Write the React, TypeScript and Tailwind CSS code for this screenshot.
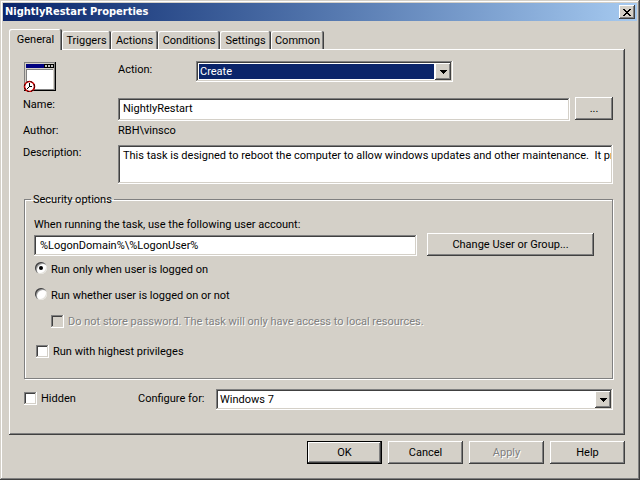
import { useState } from 'react';
import type { ReactNode } from 'react';

const raised =
  'bg-[#d4d0c8] shadow-[inset_-1px_-1px_#404040,inset_1px_1px_#fff,inset_-2px_-2px_#808080]';
const sunken =
  'shadow-[inset_-1px_-1px_#fff,inset_1px_1px_#808080,inset_-2px_-2px_#d4d0c8,inset_2px_2px_#404040]';
const disabledText = 'text-[#808080] [text-shadow:1px_1px_#fff]';

const tabs = [
  { name: 'General', width: 'w-[53px]' },
  { name: 'Triggers', width: 'w-[49px]' },
  { name: 'Actions', width: 'w-[47px]' },
  { name: 'Conditions', width: 'w-[62px]' },
  { name: 'Settings', width: 'w-[51px]' },
  { name: 'Common', width: 'w-[53px]' },
];

function TaskIcon() {
  return (
    <svg width="33" height="31" viewBox="0 0 33 31" shapeRendering="crispEdges" aria-hidden="true">
      <path d="M1 1h32v29H1z" fill="#000" />
      <path d="M1 1h31v28H1z" fill="#808080" />
      <path d="M2 2h29v26H2z" fill="#d4d0c8" />
      <path d="M3 3h28v4H3z" fill="#000080" />
      <path d="M21 3h10v4H21z" fill="#000" />
      <path d="M22 4h2v2h-2zM25 4h2v2h-2zM28 4h2v2h-2z" fill="#c0c0c0" />
      <path d="M3 8h27v20H3z" fill="#808080" />
      <path d="M4 9h26v19H4z" fill="#fff" />
      <g shapeRendering="auto">
        <circle cx="6.5" cy="25.5" r="5" fill="#fff" stroke="#e00000" strokeWidth="1.6" />
        <circle cx="6.5" cy="25.5" r="5" fill="none" stroke="#000" strokeWidth="1" strokeDasharray="2 2" />
      </g>
      <path d="M6 22h1v4H6zM5 26h1v1H5zM4 27h1v1H4zM7 25h2v1H7z" fill="#000" />
    </svg>
  );
}

function DropDown(props: { id: string; value: string; dark?: boolean; className: string }) {
  return (
    <div className={`relative h-[21px] p-[2px] ${sunken} ${props.className}`}>
      <select
        id={props.id}
        defaultValue={props.value}
        className={`block h-full w-full appearance-none border border-r-[17px] border-white pt-px pl-px outline-none ${
          props.dark ? 'bg-[#0a246a] text-white' : 'bg-white text-black'
        }`}
      >
        <option>{props.value}</option>
      </select>
      <span
        className={`pointer-events-none absolute top-[2px] right-[2px] bottom-[2px] flex w-4 items-center justify-center ${raised}`}
      >
        <svg width="7" height="4" viewBox="0 0 7 4" shapeRendering="crispEdges" aria-hidden="true">
          <path d="M0 0h7v1H0zM1 1h5v1H1zM2 2h3v1H2zM3 3h1v1H3z" fill="#000" />
        </svg>
      </span>
    </div>
  );
}

function Radio(props: { checked: boolean; onChange: () => void; children: ReactNode }) {
  return (
    <label className="flex h-[14px] items-center gap-1">
      <input
        type="radio"
        name="logon"
        checked={props.checked}
        onChange={props.onChange}
        className="grid size-3 shrink-0 appearance-none place-items-center rounded-full bg-white shadow-[inset_1px_1px_#404040,inset_-1px_-1px_#e4e2dc,inset_2px_2px_#a0a0a0] outline-none before:size-1 before:rounded-full checked:before:bg-black"
      />
      <span className="pt-[3px]">{props.children}</span>
    </label>
  );
}

function Check(props: { disabled?: boolean; children: ReactNode }) {
  return (
    <label className={`flex h-[14px] items-center gap-1 ${props.disabled ? disabledText : ''}`}>
      <input
        type="checkbox"
        disabled={props.disabled}
        className={`grid size-[13px] shrink-0 appearance-none place-items-center bg-white outline-none before:size-[5px] checked:before:bg-black disabled:bg-[#d4d0c8] ${sunken}`}
      />
      <span className="pt-[2px]">{props.children}</span>
    </label>
  );
}

function Button(props: { children: ReactNode; className?: string; disabled?: boolean; isDefault?: boolean }) {
  return (
    <button
      type="button"
      disabled={props.disabled}
      className={`h-[23px] ${raised} ${props.isDefault ? 'border border-black' : ''} ${
        props.disabled ? disabledText : ''
      } ${props.className ?? ''}`}
    >
      {props.children}
    </button>
  );
}

export default function App() {
  const [active, setActive] = useState('General');
  const [logon, setLogon] = useState('loggedOn');

  return (
    <main className="flex min-h-screen flex-col bg-[#d4d0c8] p-[3px] font-['Roboto',sans-serif] text-[11px] leading-[14px] text-black shadow-[inset_-1px_-1px_#404040,inset_1px_1px_#d4d0c8,inset_-2px_-2px_#808080,inset_2px_2px_#fff]">
      <header className="flex h-[18px] items-center justify-between bg-linear-to-r from-[#0a246a] to-[#a6caf0] pr-[2px] pl-[2px]">
        <h1 className="font-['DejaVu_Sans_Condensed','DejaVu_Sans',sans-serif] font-bold text-white">NightlyRestart Properties</h1>
        <button type="button" aria-label="Close" className={`flex h-[14px] w-4 items-center justify-center ${raised}`}>
          <svg width="8" height="7" viewBox="0 0 8 7" shapeRendering="crispEdges" aria-hidden="true">
            <path
              d="M0 0h2v1H0zM6 0h2v1H6zM1 1h2v1H1zM5 1h2v1H5zM2 2h4v1H2zM3 3h2v1H3zM2 4h4v1H2zM1 5h2v1H1zM5 5h2v1H5zM0 6h2v1H0zM6 6h2v1H6z"
              fill="#000"
            />
          </svg>
        </button>
      </header>

      <div className="flex flex-1 flex-col pt-2 pr-3 pl-[6px]">
        <div role="tablist" className="flex items-end">
          {tabs.map((tab) => (
            <button
              key={tab.name}
              type="button"
              role="tab"
              aria-selected={active === tab.name}
              onClick={() => setActive(tab.name)}
              className={`rounded-t-[2px] bg-[#d4d0c8] shadow-[inset_-1px_0_#404040,inset_1px_1px_#fff,inset_-2px_0_#808080] ${tab.width} ${
                active === tab.name ? 'z-10 -mb-px h-[21px]' : 'h-[18px] pt-[2px]'
              }`}
            >
              {tab.name}
            </button>
          ))}
        </div>

        <section className={`flex flex-1 flex-col pt-3 pr-3 pb-[25px] pl-[14px] ${raised}`}>
          <div className="flex h-[31px] items-start">
            <div className="w-[95px]">
              <TaskIcon />
            </div>
            <label htmlFor="action" className="w-[78px] pt-[2px]">
              Action:
            </label>
            <DropDown id="action" value="Create" dark className="w-[257px]" />
          </div>

          <div className="mt-[5px] flex items-start">
            <label htmlFor="name" className="w-[95px] pt-px">
              Name:
            </label>
            <input
              id="name"
              defaultValue="NightlyRestart"
              className={`mt-px mr-[5px] h-[23px] min-w-0 flex-1 bg-white pr-1 pb-[3px] pl-[5px] outline-none ${sunken}`}
            />
            <Button className="w-[38px]">...</Button>
          </div>

          <div className="mt-[3px] flex">
            <span className="w-[95px]">Author:</span>
            <span>RBH\vinsco</span>
          </div>

          <div className="mt-[7px] flex items-start">
            <label htmlFor="description" className="w-[95px] pt-px">
              Description:
            </label>
            <div className={`h-[39px] min-w-0 flex-1 bg-white p-[2px] ${sunken}`}>
              <textarea
                id="description"
                wrap="off"
                className="block h-full w-full resize-none overflow-hidden pt-[2px] pl-[3px] outline-none"
                defaultValue="This task is designed to reboot the computer to allow windows updates and other maintenance.  It provides"
              />
            </div>
          </div>

          <fieldset className="mt-2 ml-px min-w-0 border border-[#808080] px-[9px] pb-5 shadow-[1px_1px_#fff,inset_1px_1px_#fff]">
            <legend className="-ml-[3px] h-[14px] px-[2px] pt-px">Security options</legend>
            <label htmlFor="account" className="mt-3 block">
              When running the task, use the following user account:
            </label>
            <div className="mt-px flex items-start pr-[9px]">
              <input
                id="account"
                defaultValue="%LogonDomain%\%LogonUser%"
                className={`mt-[2px] mr-[10px] h-[21px] min-w-0 flex-1 bg-white pr-1 pb-px pl-[6px] outline-none ${sunken}`}
              />
              <Button className="w-[167px]">Change User or Group...</Button>
            </div>
            <div className="mt-[5px] flex flex-col gap-3 pl-px">
              <Radio checked={logon === 'loggedOn'} onChange={() => setLogon('loggedOn')}>
                Run only when user is logged on
              </Radio>
              <Radio checked={logon === 'always'} onChange={() => setLogon('always')}>
                Run whether user is logged on or not
              </Radio>
              <div className="pt-px pl-4">
                <Check disabled>Do not store password. The task will only have access to local resources.</Check>
              </div>
            </div>
            <div className="mt-4 pl-[2px]">
              <Check>Run with highest privileges</Check>
            </div>
          </fieldset>

          <div className="mt-[10px] flex items-start pl-px">
            <div className="w-[114px] pt-[2px]">
              <Check>Hidden</Check>
            </div>
            <label htmlFor="configure" className="w-[78px] pt-[3px]">
              Configure for:
            </label>
            <DropDown id="configure" value="Windows 7" className="flex-1" />
          </div>
        </section>

        <footer className="flex justify-end gap-[6px] pt-[6px] pb-[13px]">
          <Button isDefault className="w-[75px]">
            OK
          </Button>
          <Button className="w-[75px]">Cancel</Button>
          <Button disabled className="w-[75px]">
            Apply
          </Button>
          <Button className="w-[75px]">Help</Button>
        </footer>
      </div>
    </main>
  );
}
